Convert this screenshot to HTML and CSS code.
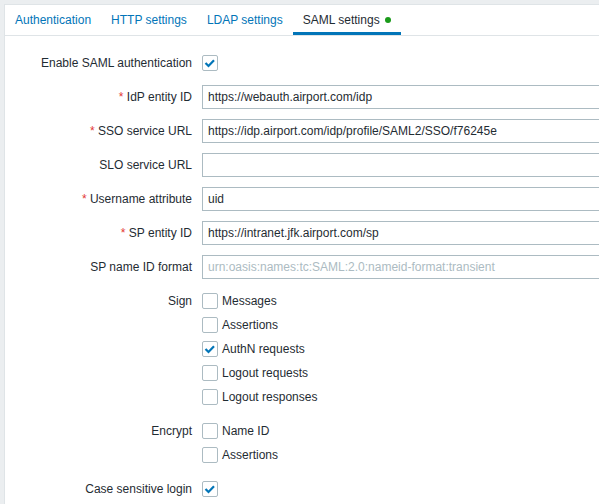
FILE: index.html
```html
<!DOCTYPE html>
<html>
<head>
<meta charset="utf-8">
<link rel="stylesheet" href="styles.css">
</head>
<body>
<div class="panel">
  <nav class="tabs">
    <a class="tab">Authentication</a>
    <a class="tab">HTTP settings</a>
    <a class="tab">LDAP settings</a>
    <a class="tab active">SAML settings <span class="dot"></span></a>
  </nav>
  <div class="form">
    <div class="label">Enable SAML authentication</div>
    <div class="field"><span class="cb checked"><svg viewBox="0 0 16 16"><polyline points="3.5,8 6.5,11 12,5.2"/></svg></span></div>

    <div class="label"><span class="req">*</span> IdP entity ID</div>
    <div class="field"><div class="input">https://webauth.airport.com/idp</div></div>

    <div class="label"><span class="req">*</span> SSO service URL</div>
    <div class="field"><div class="input">https://idp.airport.com/idp/profile/SAML2/SSO/f76245e</div></div>

    <div class="label">SLO service URL</div>
    <div class="field"><div class="input"></div></div>

    <div class="label"><span class="req">*</span> Username attribute</div>
    <div class="field"><div class="input">uid</div></div>

    <div class="label"><span class="req">*</span> SP entity ID</div>
    <div class="field"><div class="input">https://intranet.jfk.airport.com/sp</div></div>

    <div class="label">SP name ID format</div>
    <div class="field"><div class="input placeholder">urn:oasis:names:tc:SAML:2.0:nameid-format:transient</div></div>

    <div class="label">Sign</div>
    <div class="field list">
      <div class="item"><span class="cb"></span>Messages</div>
      <div class="item"><span class="cb"></span>Assertions</div>
      <div class="item"><span class="cb checked"><svg viewBox="0 0 16 16"><polyline points="3.5,8 6.5,11 12,5.2"/></svg></span>AuthN requests</div>
      <div class="item"><span class="cb"></span>Logout requests</div>
      <div class="item"><span class="cb"></span>Logout responses</div>
    </div>

    <div class="label">Encrypt</div>
    <div class="field list">
      <div class="item"><span class="cb"></span>Name ID</div>
      <div class="item"><span class="cb"></span>Assertions</div>
    </div>

    <div class="label">Case sensitive login</div>
    <div class="field"><span class="cb checked"><svg viewBox="0 0 16 16"><polyline points="3.5,8 6.5,11 12,5.2"/></svg></span></div>
  </div>
</div>
</body>
</html>
```

FILE: styles.css
```css
html, body {
  margin: 0;
  padding: 0;
  background: #ebeef0;
  overflow: hidden;
}
body {
  padding: 4px 0 0 4px;
  width: 599px;
  height: 504px;
  box-sizing: border-box;
  font-family: "Liberation Sans", Arial, sans-serif;
  font-size: 12px;
  color: #1f2c33;
}
.panel {
  background: #fff;
  border-left: 1px solid #dfe4e7;
  border-top: 1px solid #dfe4e7;
  height: 500px;
  box-sizing: border-box;
  overflow: hidden;
}
.tabs {
  display: flex;
  height: 30px;
  border-bottom: 1px solid #dfe4e7;
}
.tab {
  display: flex;
  align-items: center;
  padding: 0 10px;
  color: #0275b8;
  line-height: 14px;
  box-sizing: border-box;
  height: 30px;
}
.tab.active {
  color: #1f2c33;
  border-bottom: 3px solid #0275b8;
  padding-top: 3px;
}
.dot {
  display: inline-block;
  width: 6px;
  height: 6px;
  border-radius: 50%;
  background: #1a9a1a;
  margin-left: 5px;
}
.form {
  display: grid;
  grid-template-columns: 187px 453px;
  column-gap: 10px;
  row-gap: 10px;
  padding-top: 15px;
}
.label {
  text-align: right;
  line-height: 24px;
  white-space: nowrap;
}
.req {
  color: #e33734;
}
.field {
  display: flex;
  align-items: center;
  min-height: 24px;
}
.field.list {
  flex-direction: column;
  align-items: flex-start;
}
.item {
  display: flex;
  align-items: center;
  height: 24px;
  gap: 4px;
}
.input {
  width: 453px;
  height: 24px;
  box-sizing: border-box;
  border: 1px solid #acbbc2;
  padding: 0 5px;
  line-height: 22px;
  white-space: nowrap;
  overflow: hidden;
}
.input.placeholder {
  color: #acbbc2;
}
.cb {
  display: inline-block;
  width: 16px;
  height: 16px;
  box-sizing: border-box;
  border: 1px solid #acbbc2;
  border-radius: 2px;
  background: #fff;
  position: relative;
}
.cb svg {
  position: absolute;
  left: -1px;
  top: -1px;
  width: 16px;
  height: 16px;
}
.cb polyline {
  fill: none;
  stroke: #0275b8;
  stroke-width: 2.2;
}
```
